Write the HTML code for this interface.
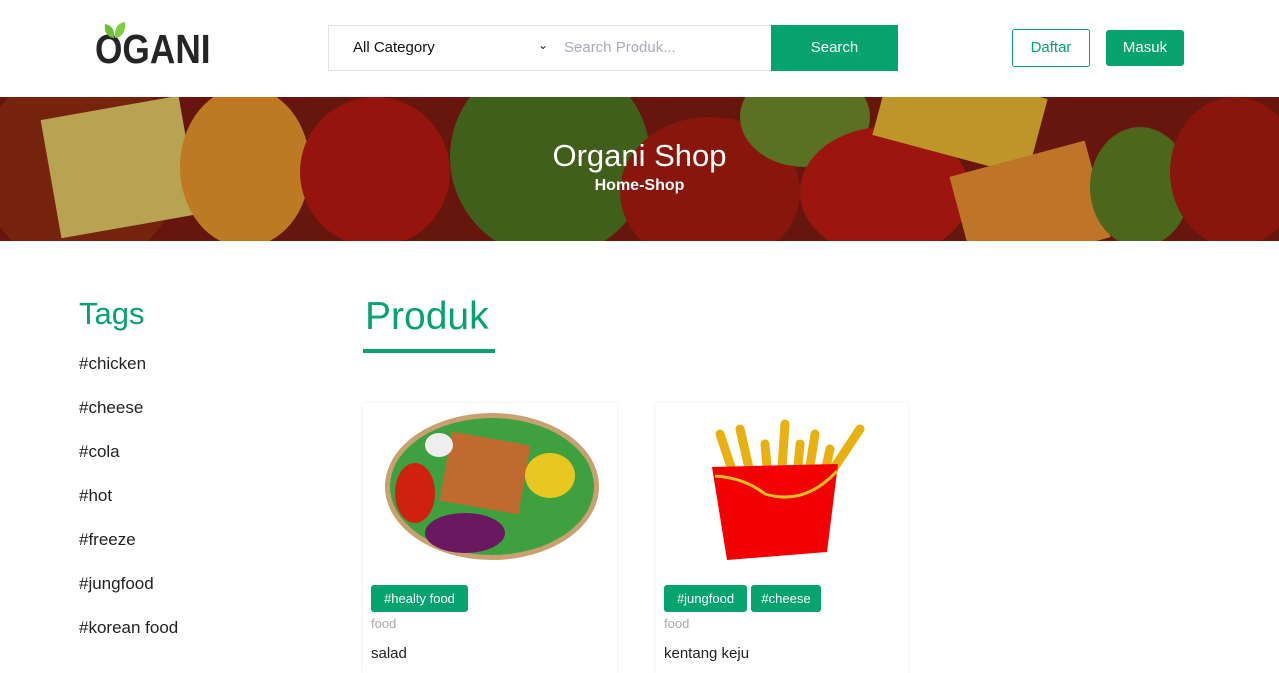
<!DOCTYPE html>
<html><head><meta charset="utf-8"><style>
*{margin:0;padding:0;box-sizing:border-box}
body{width:1279px;height:665px;overflow:hidden;background:#fff;font-family:"Liberation Sans",sans-serif;color:#222;position:relative}
.abs{position:absolute}
.g{color:#07a36e}
</style></head><body>
<!-- logo -->
<div class="abs" style="left:95px;top:27px;font-size:41px;font-weight:bold;color:#252525;transform:scaleX(0.86);transform-origin:left;line-height:44px">OGANI</div>
<svg class="abs" style="left:103px;top:21px" width="24" height="18" viewBox="0 0 24 18"><path d="M11 17C3 16 1 9 2 3c6 1 10 5 9 14z" fill="#6bbf3a"/><path d="M12 17C20 16 23 9 22 1c-7 1-11 6-10 16z" fill="#7fcf43"/></svg>
<!-- search -->
<div class="abs" style="left:328px;top:25px;width:444px;height:46px;border:1px solid #e3e3e3"></div>
<div class="abs" style="left:353px;top:39px;font-size:15px;color:#111;line-height:18px">All Category</div>
<div class="abs" style="left:538px;top:38px;font-size:12px">&#8964;</div>
<div class="abs" style="left:564px;top:39px;font-size:15px;color:#aab;line-height:18px">Search Produk...</div>
<div class="abs" style="left:771px;top:25px;width:127px;height:46px;background:#07a36e;color:#fff;font-size:15px;text-align:center;line-height:46px">Search</div>
<div class="abs" style="left:1012px;top:29px;width:78px;height:38px;border:1px solid #07a36e;border-radius:3px;color:#07a36e;font-size:15px;text-align:center;line-height:36px">Daftar</div>
<div class="abs" style="left:1106px;top:30px;width:78px;height:36px;background:#07a36e;border-radius:3px;color:#fff;font-size:15px;text-align:center;line-height:36px">Masuk</div>
<!-- hero -->
<div class="abs" style="left:0;top:97px;width:1279px;height:144px;overflow:hidden;background:#7a1a10">
<div class="abs" style="left:-20px;top:-30px;width:200px;height:200px;border-radius:50%;background:#8a2a10"></div>
<div class="abs" style="left:50px;top:10px;width:140px;height:120px;background:#d8c060;transform:rotate(-10deg)"></div>
<div class="abs" style="left:180px;top:-10px;width:130px;height:160px;border-radius:50%;background:#e0902a"></div>
<div class="abs" style="left:300px;top:0;width:150px;height:150px;border-radius:50%;background:#b01810"></div>
<div class="abs" style="left:450px;top:-40px;width:200px;height:200px;border-radius:50%;background:#4c7020"></div>
<div class="abs" style="left:620px;top:20px;width:180px;height:150px;border-radius:50%;background:#a01a10"></div>
<div class="abs" style="left:740px;top:-30px;width:130px;height:100px;border-radius:50%;background:#6a8428"></div>
<div class="abs" style="left:800px;top:30px;width:170px;height:130px;border-radius:50%;background:#b81a12"></div>
<div class="abs" style="left:880px;top:-20px;width:160px;height:80px;background:#e0b030;transform:rotate(15deg)"></div>
<div class="abs" style="left:960px;top:60px;width:140px;height:100px;background:#e08a30;transform:rotate(-15deg)"></div>
<div class="abs" style="left:1090px;top:30px;width:100px;height:120px;border-radius:50%;background:#5a7a22"></div>
<div class="abs" style="left:1170px;top:0;width:130px;height:150px;border-radius:50%;background:#a01a10"></div>
<div class="abs" style="left:0;top:0;width:1279px;height:144px;background:rgba(0,0,0,0.15)"></div>
<div class="abs" style="left:0;top:41px;width:1279px;text-align:center;color:#fff;font-size:31px">Organi Shop</div>
<div class="abs" style="left:0;top:80px;width:1279px;text-align:center;color:#fff;font-size:16px;font-weight:bold">Home-Shop</div>
</div>
<!-- tags -->
<div class="abs g" style="left:79px;top:296px;font-size:31px">Tags</div>
<div class="abs" style="left:79px;top:342px;font-size:17px;line-height:44px;color:#222">#chicken<br>#cheese<br>#cola<br>#hot<br>#freeze<br>#jungfood<br>#korean food</div>
<div class="abs g" style="left:365px;top:295px;font-size:39px">Produk</div>
<div class="abs" style="left:363px;top:349px;width:132px;height:4px;background:#07a36e"></div>
<!-- cards -->
<div class="abs" style="left:363px;top:403px;width:254px;height:270px;box-shadow:0 0 4px rgba(0,0,0,0.08)"></div>
<div class="abs" style="left:656px;top:403px;width:252px;height:270px;box-shadow:0 0 4px rgba(0,0,0,0.08)"></div>
<div class="abs" style="left:385px;top:413px;width:214px;height:147px;border-radius:50%;background:#c9a070;overflow:hidden">
<div class="abs" style="left:5px;top:5px;width:204px;height:137px;border-radius:50%;background:#3fa040"></div>
<div class="abs" style="left:60px;top:25px;width:80px;height:70px;background:#c06a30;transform:rotate(10deg)"></div>
<div class="abs" style="left:140px;top:40px;width:50px;height:45px;border-radius:50%;background:#e8c820"></div>
<div class="abs" style="left:40px;top:100px;width:80px;height:40px;border-radius:50%;background:#6a1860"></div>
<div class="abs" style="left:10px;top:50px;width:40px;height:60px;border-radius:50%;background:#d02010"></div>
<div class="abs" style="left:40px;top:20px;width:28px;height:24px;border-radius:50%;background:#eee"></div>
</div>
<svg class="abs" style="left:705px;top:414px" width="160" height="148" viewBox="0 0 160 148">
<g stroke="#e8b010" stroke-width="9" stroke-linecap="round"><line x1="15" y1="20" x2="35" y2="80"/><line x1="35" y1="15" x2="50" y2="80"/><line x1="60" y1="30" x2="65" y2="85"/><line x1="80" y1="10" x2="75" y2="85"/><line x1="95" y1="30" x2="90" y2="85"/><line x1="110" y1="20" x2="100" y2="85"/><line x1="125" y1="35" x2="115" y2="80"/><line x1="155" y1="15" x2="125" y2="60"/></g>
<path d="M7 53L133 50L122 138L22 146Z" fill="#f30000"/>
<path d="M10 62Q40 64 60 80Q100 92 132 57" stroke="#f0c020" stroke-width="3" fill="none"/>
</svg>
<div class="abs" style="left:371px;top:585px;width:97px;height:27px;background:#07a36e;border-radius:3px;color:#fff;font-size:13px;text-align:center;line-height:27px">#healty food</div>
<div class="abs" style="left:664px;top:585px;width:83px;height:27px;background:#07a36e;border-radius:3px;color:#fff;font-size:13px;text-align:center;line-height:27px">#jungfood</div>
<div class="abs" style="left:751px;top:585px;width:70px;height:27px;background:#07a36e;border-radius:3px;color:#fff;font-size:13px;text-align:center;line-height:27px">#cheese</div>
<div class="abs" style="left:371px;top:616px;font-size:13px;color:#aaa">food</div>
<div class="abs" style="left:664px;top:616px;font-size:13px;color:#aaa">food</div>
<div class="abs" style="left:371px;top:645px;font-size:15px;color:#222">salad</div>
<div class="abs" style="left:664px;top:645px;font-size:15px;color:#222">kentang keju</div>
</body></html>
